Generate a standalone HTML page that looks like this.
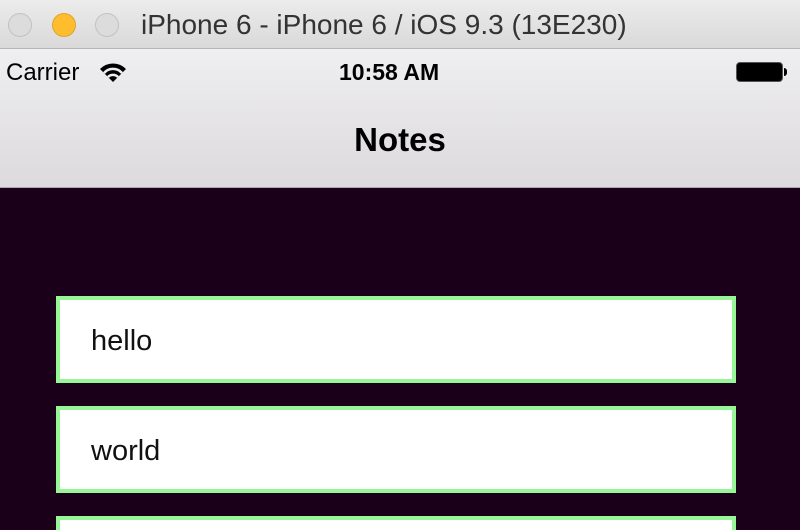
<!DOCTYPE html>
<html style="width:800px;height:530px;overflow:hidden"><head><style>
body{margin:0;width:800px;height:530px;overflow:hidden;background:#1b0019;font-family:"Liberation Sans",sans-serif;position:relative}
.tb{position:absolute;left:0;top:0;width:800px;height:48px;background:linear-gradient(#ececec,#d9d9d9);border-bottom:1px solid #b5b5b5}
.c{position:absolute;top:13px;width:24px;height:24px;border-radius:50%;background:#dcdcdc;border:1px solid #c2c2c2;box-sizing:border-box}
.tt{position:absolute;left:141px;top:9px;font-size:28px;color:#333}
.nav{position:absolute;top:49px;left:0;width:800px;height:138px;background:linear-gradient(#efeef0,#dcdadc);border-bottom:1px solid #b0a8b0}
.st{position:absolute;font-size:24px;color:#000}
.box{position:absolute;left:56px;width:680px;height:87px;box-sizing:border-box;border:4px solid #97f797;background:#fff}
.box span{position:absolute;left:31px;top:25px;font-size:29px;color:#111}
</style></head><body>
<div class="tb">
<div class="c" style="left:8px"></div>
<div class="c" style="left:52px;background:#fdbd2e;border-color:#e0a528"></div>
<div class="c" style="left:95px"></div>
<div class="tt">iPhone 6 - iPhone 6 / iOS 9.3 (13E230)</div>
</div>
<div class="nav">
<div class="st" style="left:6px;top:10px">Carrier</div>
<svg style="position:absolute;left:98px;top:12px" width="30" height="22" viewBox="0 0 30 22"><path d="M15 21 L2 8 A18 18 0 0 1 28 8 Z" fill="#000"/><path d="M6 12 A12 12 0 0 1 24 12" stroke="#efeef0" stroke-width="2.5" fill="none"/><path d="M10 16 A7 7 0 0 1 20 16" stroke="#efeef0" stroke-width="2.5" fill="none"/></svg>
<div class="st" style="left:339px;top:10px;font-weight:bold;font-size:23px">10:58 AM</div>
<div style="position:absolute;left:736px;top:13px;width:47px;height:20px;border:1.5px solid #555;border-radius:4px;background:#000;box-sizing:border-box"></div>
<div style="position:absolute;left:784px;top:19px;width:3px;height:8px;background:#000;border-radius:0 3px 3px 0"></div>
<div style="position:absolute;left:0;width:800px;text-align:center;top:72px;font-size:33px;font-weight:bold;color:#000">Notes</div>
</div>
<div class="box" style="top:296px"><span>hello</span></div>
<div class="box" style="top:406px"><span>world</span></div>
<div class="box" style="top:516px;height:14px;border-bottom:0"></div>
</body></html>
